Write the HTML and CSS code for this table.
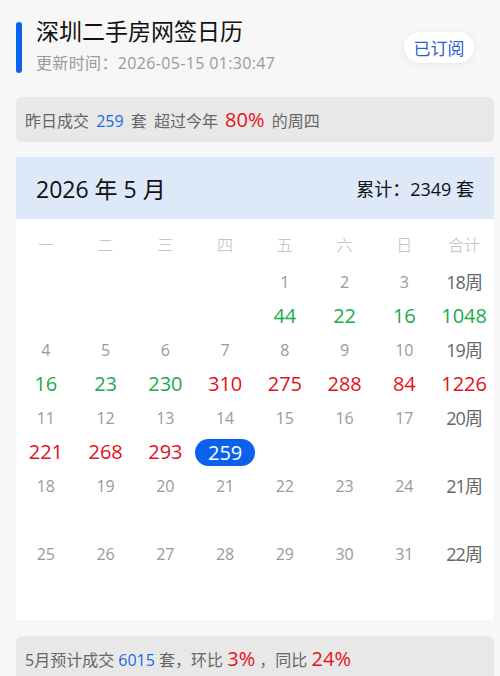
FILE: index.html
```html
<!DOCTYPE html>
<html lang="zh">
<head>
<meta charset="utf-8">
<link rel="stylesheet" href="styles.css">
</head>
<body>
<div class="page">
  <header class="top">
    <div class="bar"></div>
    <div class="titles">
      <div class="title">深圳二手房网签日历</div>
      <div class="sub">更新时间：2026-05-15 01:30:47</div>
    </div>
    <div class="sub-btn">已订阅</div>
  </header>

  <div class="banner top-banner">昨日成交 <span class="blue">259</span> 套 超过今年 <span class="red big">80%</span> 的周四</div>

  <section class="card">
    <div class="card-head">
      <div class="month">2026 年 5 月</div>
      <div class="total">累计：2349 套</div>
    </div>
    <div class="grid">
      <div class="wd">一</div><div class="wd">二</div><div class="wd">三</div><div class="wd">四</div><div class="wd">五</div><div class="wd">六</div><div class="wd">日</div><div class="wd">合计</div>

      <div class="d"></div><div class="d"></div><div class="d"></div><div class="d"></div><div class="d">1</div><div class="d">2</div><div class="d">3</div><div class="wk">18周</div>
      <div class="v"></div><div class="v"></div><div class="v"></div><div class="v"></div><div class="v g">44</div><div class="v g">22</div><div class="v g">16</div><div class="v g">1048</div>

      <div class="d">4</div><div class="d">5</div><div class="d">6</div><div class="d">7</div><div class="d">8</div><div class="d">9</div><div class="d">10</div><div class="wk">19周</div>
      <div class="v g">16</div><div class="v g">23</div><div class="v g">230</div><div class="v r">310</div><div class="v r">275</div><div class="v r">288</div><div class="v r">84</div><div class="v r">1226</div>

      <div class="d">11</div><div class="d">12</div><div class="d">13</div><div class="d">14</div><div class="d">15</div><div class="d">16</div><div class="d">17</div><div class="wk">20周</div>
      <div class="v r">221</div><div class="v r">268</div><div class="v r">293</div><div class="v"><span class="pill">259</span></div><div class="v"></div><div class="v"></div><div class="v"></div><div class="v"></div>

      <div class="d">18</div><div class="d">19</div><div class="d">20</div><div class="d">21</div><div class="d">22</div><div class="d">23</div><div class="d">24</div><div class="wk">21周</div>
      <div class="v"></div><div class="v"></div><div class="v"></div><div class="v"></div><div class="v"></div><div class="v"></div><div class="v"></div><div class="v"></div>

      <div class="d">25</div><div class="d">26</div><div class="d">27</div><div class="d">28</div><div class="d">29</div><div class="d">30</div><div class="d">31</div><div class="wk">22周</div>
      <div class="v"></div><div class="v"></div><div class="v"></div><div class="v"></div><div class="v"></div><div class="v"></div><div class="v"></div><div class="v"></div>
    </div>
  </section>

  <div class="banner bottom">5月预计成交 <span class="blue">6015</span> 套，环比 <span class="red big">3%</span> ，同比 <span class="red big">24%</span></div>
</div>
</body>
</html>
```

FILE: styles.css
```css
* { box-sizing: border-box; }
html, body { margin: 0; padding: 0; }
body {
  background: #f7f7f7;
  font-family: "Open Sans", "Noto Sans CJK SC", sans-serif;
  color: #333;
  overflow: hidden;
}
.page { padding: 0 6px 0 16px; }

.top {
  display: flex;
  align-items: flex-start;
  padding-top: 15px;
  height: 76px;
}
.bar {
  width: 6px;
  height: 51px;
  margin-top: 7px;
  background: #0a62f0;
  border-radius: 3px;
}
.titles { margin-left: 14px; flex: 1; }
.title {
  font-size: 23px;
  line-height: 30px;
  color: #111;
  font-family: "Noto Sans CJK SC", sans-serif;
}
.sub {
  margin-top: 6px;
  font-size: 16px;
  line-height: 24px;
  color: #9a9a9a;
  letter-spacing: 0.35px;
}
.sub-btn {
  margin-top: 17px;
  margin-right: 20px;
  width: 70px;
  height: 31px;
  line-height: 31px;
  text-align: center;
  background: #fff;
  border-radius: 16px;
  box-shadow: 0 1px 6px rgba(0, 0, 0, 0.08);
  color: #2b5fd0;
  font-size: 17px;
  font-family: "Noto Sans CJK SC", sans-serif;
}

.banner {
  margin-top: 21px;
  width: 478px;
  height: 45px;
  background: #e8e8e8;
  border-radius: 6px;
  padding-left: 9px;
  font-size: 16px;
  line-height: 45px;
  color: #666;
  white-space: nowrap;
}
.top-banner { word-spacing: 3px; }
.blue { color: #1a6be0; }
.red { color: #e8101a; }
.big { font-size: 20px; }

.card {
  margin-top: 15px;
  width: 478px;
  background: #fff;
  padding-bottom: 15px;
}
.card-head {
  height: 62px;
  background: #dde8f9;
  display: flex;
  align-items: center;
  justify-content: space-between;
  padding: 0 20px;
}
.month { font-size: 23px; color: #111; }
.total { font-size: 18px; color: #111; }

.grid {
  display: grid;
  grid-template-columns: repeat(8, 1fr);
  padding-top: 10px;
  text-align: center;
}
.wd {
  height: 30px;
  line-height: 30px;
  font-size: 16px;
  color: #bcbcbc;
  font-family: "Noto Sans CJK SC", sans-serif;
  font-weight: 300;
  margin-bottom: 6px;
}
.d {
  height: 34px;
  line-height: 34px;
  font-size: 16px;
  color: #9a9a9a;
}
.wk {
  height: 34px;
  line-height: 34px;
  font-size: 18px;
  color: #666;
  letter-spacing: -1px;
}
.v {
  height: 34px;
  line-height: 34px;
  font-size: 20px;
  display: flex;
  align-items: center;
  justify-content: center;
}
.g { color: #1aab4a; }
.r { color: #e30f1c; }
.pill {
  display: block;
  width: 100%;
  height: 27px;
  line-height: 27px;
  border-radius: 14px;
  background: #0a62ec;
  color: #fff;
  font-size: 20px;
}

.banner.bottom { margin-top: 16px; height: 48px; line-height: 46px; }
```
